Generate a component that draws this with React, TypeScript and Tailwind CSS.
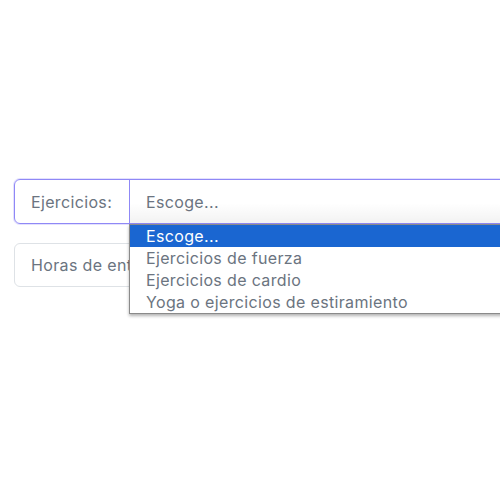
import { useState } from "react";

const OPTIONS = [
  "Escoge...",
  "Ejercicios de fuerza",
  "Ejercicios de cardio",
  "Yoga o ejercicios de estiramiento",
];

export default function App() {
  const [active] = useState(0);

  return (
    <div className="relative h-[500px] w-[500px] overflow-hidden bg-white font-['Inter',sans-serif] text-[16px] tracking-[0.35px] text-[#6b7480]">
      <div className="flex w-[540px] flex-col gap-[19px] pl-[14px] pt-[179px]">
        {/* focused group */}
        <div className="relative flex h-[45px] rounded-[6px] border border-[#8f88f6] shadow-[0_0_0_1px_rgba(143,136,246,0.25)]">
          <div className="flex w-[115px] shrink-0 items-center border-r border-[#8f88f6] pl-[16px]">
            Ejercicios:
          </div>
          <div className="flex flex-1 items-center pl-[16px]">{OPTIONS[active]}</div>
          <div className="absolute bottom-0 left-[115px] right-0 h-[20px] bg-gradient-to-b from-transparent to-[rgba(0,0,0,0.05)]" />

          {/* open list */}
          <div className="absolute left-[114px] top-[44px] z-10 w-[420px] border border-[#8a8a8a] bg-white shadow-[0_2px_3px_rgba(0,0,0,0.3)]">
            {OPTIONS.map((opt, i) => (
              <div
                key={opt}
                className={
                  i === active
                    ? "flex h-[22px] items-center bg-[#1a66d1] pl-[16px] leading-[22px] text-white"
                    : "flex h-[22px] items-center pl-[16px] leading-[22px]"
                }
              >
                {opt}
              </div>
            ))}
          </div>
        </div>

        <div className="flex h-[44px] rounded-[6px] border border-[#dee2e6]">
          <div className="flex shrink-0 items-center whitespace-nowrap border-r border-[#dee2e6] px-[16px]">
            Horas de entrenamiento:
          </div>
          <div className="flex-1" />
        </div>
      </div>
    </div>
  );
}
